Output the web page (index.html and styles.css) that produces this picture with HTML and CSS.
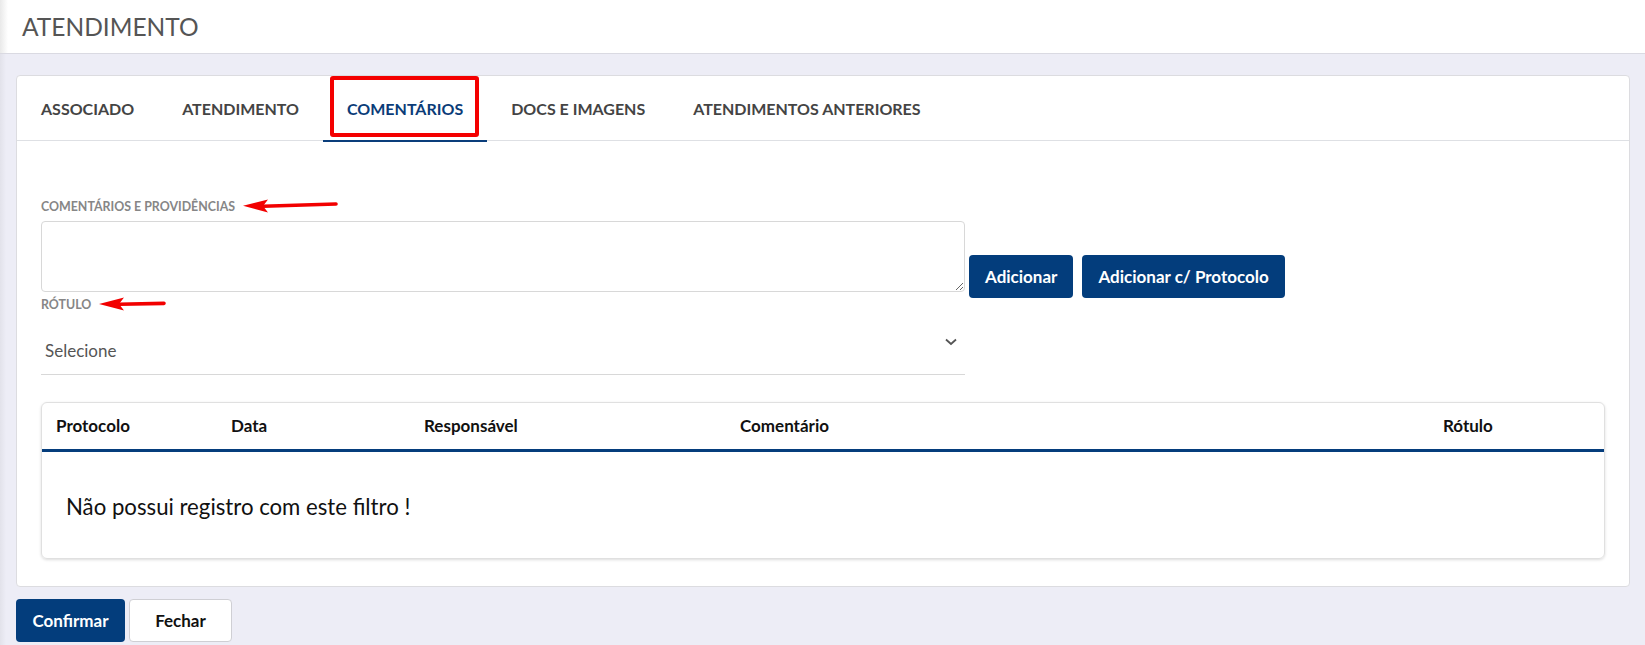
FILE: index.html
```html
<!DOCTYPE html>
<html lang="pt-BR">
    <head>
        <meta charset="UTF-8">
        <meta name="viewport" content="width=device-width, initial-scale=1.0">
        <title>Atendimento</title>
        <link rel="stylesheet" href="styles.css">
    </head>
    <body>
        <!-- barra do título -->
        <header class="topbar">
            <h1 class="page-title">ATENDIMENTO</h1>
        </header>

        <main class="page">
            <section class="card">
                <!-- abas -->
                <nav class="tabs">
                    <a class="tab" href="javascript:;">ASSOCIADO</a>
                    <a class="tab" href="javascript:;">ATENDIMENTO</a>
                    <a class="tab tab-active" href="javascript:;">COMENTÁRIOS</a>
                    <a class="tab" href="javascript:;">DOCS E IMAGENS</a>
                    <a class="tab" href="javascript:;">ATENDIMENTOS ANTERIORES</a>
                </nav>

                <div class="panel">
                    <div class="form-row">
                        <div class="form-col">
                            <label class="field-label">COMENTÁRIOS E PROVIDÊNCIAS
                                <svg class="arrow arrow-long" width="96" height="14" viewBox="0 0 96 14">
                                    <path d="M20 7.2 L93 5" stroke="#f20000" stroke-width="3.6" stroke-linecap="round"/>
                                    <path d="M0 6.8 L25 0.5 L20 7 L25 13.5 Z" fill="#f20000"/>
                                </svg>
                            </label>
                            <textarea class="comment-box"></textarea>

                            <label class="field-label label-rotulo">RÓTULO
                                <svg class="arrow" width="68" height="14" viewBox="0 0 68 14">
                                    <path d="M20 7.2 L65 6.4" stroke="#f20000" stroke-width="3.6" stroke-linecap="round"/>
                                    <path d="M0 7 L25 0.5 L20 7 L25 13.5 Z" fill="#f20000"/>
                                </svg>
                            </label>
                            <div class="select">
                                <span class="select-text">Selecione</span>
                                <svg class="chevron" width="12" height="8" viewBox="0 0 12 8">
                                    <path d="M1 1.5 L6 6 L11 1.5" fill="none" stroke="#555" stroke-width="1.8"/>
                                </svg>
                            </div>
                        </div>
                        <div class="form-actions">
                            <button class="btn btn-primary">Adicionar</button>
                            <button class="btn btn-primary">Adicionar c/ Protocolo</button>
                        </div>
                    </div>

                    <!-- lista de comentários -->
                    <div class="table-card">
                        <div class="table-head">
                            <span>Protocolo</span>
                            <span>Data</span>
                            <span>Responsável</span>
                            <span>Comentário</span>
                            <span>Rótulo</span>
                        </div>
                        <div class="table-empty">Não possui registro com este filtro !</div>
                    </div>
                </div>
            </section>

            <div class="footer-actions">
                <button class="btn btn-primary btn-confirm">Confirmar</button>
                <button class="btn btn-light">Fechar</button>
            </div>
        </main>
    </body>
</html>
```

FILE: styles.css
```css
*{
    margin: 0;
    padding: 0;
    box-sizing: border-box;
}
body{
    background: linear-gradient(to right, #e2e2ea, #ededf6 6px);
    font-family: Lato, "Liberation Sans", sans-serif;
    color: #222;
    min-height: 645px;
}
.topbar{
    height: 54px;
    background: linear-gradient(to right, #e9e9e9, #fff 8px);
    border-bottom: 1px solid #dadae2;
    display: flex;
    align-items: center;
    padding-left: 22px;
}
.page-title{
    font-size: 24.5px;
    font-weight: 400;
    color: #555;
}
.page{
    padding: 21px 15px 0 16px;
}
.card{
    background-color: #fff;
    border: 1px solid #dcdce0;
    border-radius: 4px;
}
/* abas */
.tabs{
    display: flex;
    height: 65px;
    border-bottom: 1px solid #dee0e4;
}
.tab{
    position: relative;
    display: flex;
    align-items: center;
    height: 66px;
    padding: 0 24px;
    margin-bottom: -1px;
    border-bottom: 2px solid transparent;
    font-size: 16px;
    font-weight: 700;
    color: #444;
    text-decoration: none;
}
.tab-active{
    color: #0b3c78;
    border-bottom-color: #0a3d7b;
}
/* destaque vermelho na aba ativa */
.tab-active::after{
    content: "";
    position: absolute;
    top: 0;
    left: 7px;
    right: 8px;
    bottom: 3px;
    border: 4px solid #f40000;
    border-radius: 3px;
}
.panel{
    padding: 57px 24px 27px;
}
.form-row{
    display: flex;
    align-items: flex-start;
}
.form-col{
    width: 924px;
}
.field-label{
    display: flex;
    align-items: center;
    gap: 8px;
    height: 16px;
    font-size: 12.4px;
    font-weight: 700;
    color: #868686;
}
.arrow{
    margin-top: -1px;
}
.comment-box{
    display: block;
    width: 924px;
    height: 71px;
    margin-top: 7px;
    border: 1px solid #d8d8d8;
    border-radius: 4px;
    font-family: inherit;
}
.label-rotulo{
    margin-top: 4px;
}
.select{
    display: flex;
    align-items: center;
    justify-content: space-between;
    height: 63px;
    padding: 0 8px 0 4px;
    border-bottom: 1px solid #d8d8d8;
}
.select-text{
    padding-top: 14px;
    font-size: 17px;
    color: #555;
}
.chevron{
    margin-top: -2px;
}
.form-actions{
    display: flex;
    gap: 9px;
    margin: 57px 0 0 4px;
}
.btn{
    height: 43px;
    padding: 0 16px;
    border: none;
    border-radius: 4px;
    font-family: inherit;
    font-size: 17px;
    font-weight: 700;
    cursor: pointer;
}
.btn-primary{
    background-color: #033d7c;
    color: #fff;
}
.btn-light{
    width: 103px;
    background-color: #fff;
    border: 1px solid #cfcfd4;
    color: #111;
}
/* tabela */
.table-card{
    margin-top: 27px;
    border: 1px solid #e0e0e0;
    border-radius: 6px;
    box-shadow: 0 1px 3px rgba(0, 0, 0, 0.14);
    overflow: hidden;
}
.table-head{
    display: grid;
    grid-template-columns: 175px 193px 316px 703px 1fr;
    align-items: center;
    height: 49px;
    padding: 0 0 1px 14px;
    border-bottom: 3px solid #053d7c;
    font-size: 17px;
    font-weight: 700;
    color: #111;
}
.table-empty{
    display: flex;
    align-items: center;
    height: 106px;
    padding: 2px 0 0 24px;
    font-size: 22.2px;
    color: #111;
}
.footer-actions{
    display: flex;
    gap: 4px;
    margin-top: 12px;
}
.btn-confirm{
    width: 109px;
}
```
